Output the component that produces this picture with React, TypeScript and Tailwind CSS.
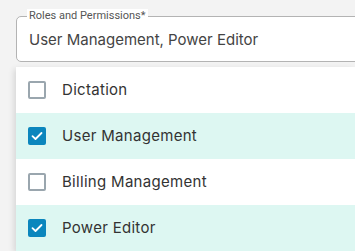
import React from "react";

const options = [
  { label: "Dictation", checked: false },
  { label: "User Management", checked: true },
  { label: "Billing Management", checked: false },
  { label: "Power Editor", checked: true },
];

function Box({ checked }: { checked: boolean }) {
  if (checked) {
    return (
      <div className="w-[18px] h-[18px] rounded-[2px] bg-[#0b86bd] flex items-center justify-center shrink-0">
        <svg width="12" height="10" viewBox="0 0 12 10" fill="none">
          <path d="M1.5 5.2 L4.5 8 L10.5 2" stroke="white" strokeWidth="1.8" strokeLinecap="round" strokeLinejoin="round" />
        </svg>
      </div>
    );
  }
  return <div className="w-[18px] h-[18px] rounded-[2px] border-2 border-[#9aa6ae] bg-white shrink-0" />;
}

export default function App() {
  return (
    <div className="w-[355px] h-[251px] bg-[#f3f3f3] overflow-hidden pl-4 pt-4" style={{ fontFamily: "Inter, 'Noto Sans', sans-serif" }}>
      <div className="relative h-[46px] -mr-4 border border-[#b3b3b3] rounded-[5px] bg-white flex items-center pl-[12px]">
        <span
          className="absolute left-[10px] -top-[8px] bg-white px-[2px] text-[11px] leading-[14px] text-[#555]"
          style={{ fontFamily: "Roboto, sans-serif" }}
        >
          Roles and Permissions*
        </span>
        <span className="text-[15px] text-[#444] pt-[2px]">User Management, Power Editor</span>
      </div>
      <div className="mt-[5px] bg-white shadow-[-2px_2px_6px_rgba(0,0,0,0.12)]">
        {options.map((o) => (
          <div
            key={o.label}
            className={"h-[46px] flex items-center pl-3 gap-4 " + (o.checked ? "bg-[#ddf7f2]" : "bg-white")}
          >
            <Box checked={o.checked} />
            <span className="text-[15px] tracking-[0.3px] text-[#333]">{o.label}</span>
          </div>
        ))}
      </div>
    </div>
  );
}
